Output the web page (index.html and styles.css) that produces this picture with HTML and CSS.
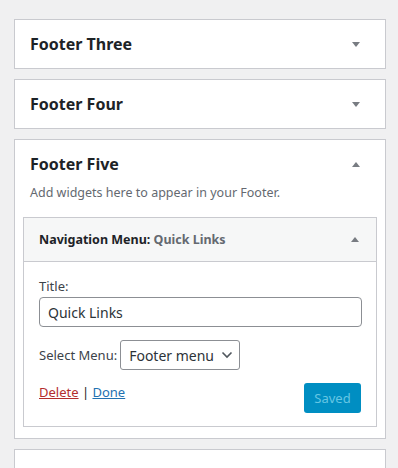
FILE: index.html
```html
<!DOCTYPE html>
<html>
<head>
<meta charset="utf-8">
<link rel="stylesheet" href="styles.css">
</head>
<body>
<div class="sidebars">
  <div class="area">
    <div class="area-head"><h3>Footer Three</h3><span class="arrow down"></span></div>
  </div>
  <div class="area">
    <div class="area-head"><h3>Footer Four</h3><span class="arrow down"></span></div>
  </div>
  <div class="area open">
    <div class="area-head"><h3>Footer Five</h3><span class="arrow up"></span></div>
    <p class="desc">Add widgets here to appear in your Footer.</p>
    <div class="widget">
      <div class="widget-head">
        <h4>Navigation Menu:<span class="in-title"> Quick Links</span></h4>
        <span class="arrow up"></span>
      </div>
      <div class="widget-body">
        <label class="field-label">Title:</label>
        <input class="text-input" type="text" value="Quick Links">
        <div class="select-row">
          <span>Select Menu:</span>
          <div class="select">Footer menu
            <svg class="chev" width="12" height="8" viewBox="0 0 12 8"><path d="M1.5 1.5 L6 6 L10.5 1.5" fill="none" stroke="#50575e" stroke-width="1.6"/></svg>
          </div>
        </div>
        <div class="actions">
          <div class="links"><a class="delete">Delete</a> | <a class="done">Done</a></div>
          <button class="saved">Saved</button>
        </div>
      </div>
    </div>
  </div>
  <div class="area">
    <div class="area-head"><h3>Inactive Widgets</h3><span class="arrow down"></span></div>
  </div>
</div>
</body>
</html>
```
FILE: styles.css
```css
html, body {
  margin: 0;
  padding: 0;
  background: #f0f0f1;
  font-family: "Noto Sans", "Open Sans", sans-serif;
  color: #1d2327;
  overflow: hidden;
  height: 468px;
}
.sidebars {
  padding: 19px 12px 0 14px;
  display: flex;
  flex-direction: column;
  gap: 10px;
}
.area {
  background: #fff;
  border: 1px solid #c9cacf;
}
.area-head {
  height: 48px;
  display: flex;
  align-items: center;
  justify-content: space-between;
  padding: 0 25px 0 15px;
}
.open .area-head {
  height: 38px;
  padding-top: 5px;
}
.area-head h3 {
  margin: 0;
  font-size: 16px;
  font-weight: 700;
  color: #1d2327;
}
.arrow {
  width: 0;
  height: 0;
  border-left: 4px solid transparent;
  border-right: 4px solid transparent;
}
.arrow.down { border-top: 5px solid #787c82; }
.arrow.up { border-bottom: 5px solid #787c82; }
.desc {
  margin: 0 0 14px 15px;
  font-size: 12.5px;
  color: #646970;
  line-height: 20px;
}
.widget {
  margin: 0 8px 11px 8px;
  border: 1px solid #c9cacf;
}
.widget-head {
  height: 43px;
  background: #f6f7f7;
  border-bottom: 1px solid #c9cacf;
  display: flex;
  align-items: center;
  justify-content: space-between;
  padding: 0 17px 0 15px;
}
.widget-head h4 {
  margin: 0;
  font-size: 12.5px;
  font-weight: 700;
  color: #1d2327;
}
.in-title {
  color: #646970;
}
.widget-body {
  padding: 14px 15px 13px 15px;
  display: flex;
  flex-direction: column;
  font-size: 13px;
  color: #3c434a;
}
.field-label {
  line-height: 20px;
  margin-bottom: 1px;
}
.text-input {
  box-sizing: border-box;
  width: 323px;
  height: 30px;
  border: 1px solid #8c8f94;
  border-radius: 4px;
  padding: 0 8px;
  font-family: inherit;
  font-size: 14px;
  color: #2c3338;
  margin: 0;
}
.select-row {
  margin-top: 13px;
  display: flex;
  align-items: center;
  gap: 3px;
}
.select {
  box-sizing: border-box;
  width: 120px;
  height: 30px;
  border: 1px solid #8c8f94;
  border-radius: 3px;
  display: flex;
  align-items: center;
  justify-content: space-between;
  padding: 0 6px 0 8px;
  font-size: 14px;
  color: #2c3338;
}
.actions {
  margin-top: 13px;
  display: flex;
  justify-content: space-between;
  align-items: flex-start;
}
.links {
  color: #1d2327;
  line-height: 18px;
}
.links a { text-decoration: underline; }
.delete { color: #b32d2e; }
.done { color: #2271b1; }
.saved {
  width: 57px;
  height: 30px;
  border: none;
  border-radius: 3px;
  background: #008ec2;
  color: #66c6e4;
  font-family: inherit;
  font-size: 13px;
  padding: 0;
}
```
